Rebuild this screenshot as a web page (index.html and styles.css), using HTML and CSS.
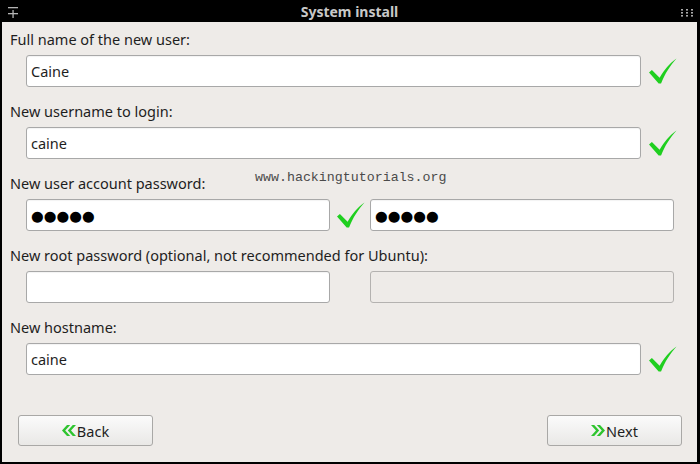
FILE: index.html
```html
<!DOCTYPE html>
<html lang="en">
<head>
    <meta charset="UTF-8">
    <title>System install</title>
    <link rel="stylesheet" href="styles.css">
</head>
<body>
    <div class="window">
        <header class="titlebar">
            <svg class="pin" width="10" height="12" viewBox="0 0 10 12">
                <g fill="#b4b4b4">
                    <rect x="0" y="0" width="10" height="1.3"/>
                    <rect x="0" y="6" width="10" height="1.3"/>
                    <rect x="4.4" y="3" width="1.3" height="8"/>
                </g>
            </svg>
            <span class="title">System install</span>
            <svg class="grip" width="12" height="8" viewBox="0 0 12 8">
                <g fill="#a8a8a8">
                    <rect x="0" y="0" width="2" height="1.6"/><rect x="5" y="0" width="2" height="1.6"/><rect x="10" y="0" width="2" height="1.6"/>
                    <rect x="0" y="3" width="2" height="1.6"/><rect x="5" y="3" width="2" height="1.6"/><rect x="10" y="3" width="2" height="1.6"/>
                    <rect x="0" y="6" width="2" height="1.6"/><rect x="5" y="6" width="2" height="1.6"/><rect x="10" y="6" width="2" height="1.6"/>
                </g>
            </svg>
        </header>

        <main class="content">
            <div class="field">
                <div class="label">Full name of the new user:</div>
                <div class="entry-row single">
                    <div class="entry">Caine</div>
                    <svg class="check" viewBox="0 0 30 28"><path d="M1 15 L4 12.5 L12 20.5 C17 12 22 6 29.5 0.5 C23 8 17.5 16 13.5 26.5 L11 26.5 Z"/></svg>
                </div>
            </div>

            <div class="field">
                <div class="label">New username to login:</div>
                <div class="entry-row single">
                    <div class="entry">caine</div>
                    <svg class="check" viewBox="0 0 30 28"><path d="M1 15 L4 12.5 L12 20.5 C17 12 22 6 29.5 0.5 C23 8 17.5 16 13.5 26.5 L11 26.5 Z"/></svg>
                </div>
            </div>

            <div class="field">
                <div class="label">New user account password:</div>
                <div class="entry-row pair">
                    <div class="entry secret">●●●●●</div>
                    <svg class="check" viewBox="0 0 30 28"><path d="M1 15 L4 12.5 L12 20.5 C17 12 22 6 29.5 0.5 C23 8 17.5 16 13.5 26.5 L11 26.5 Z"/></svg>
                    <div class="entry secret">●●●●●</div>
                </div>
            </div>

            <div class="field">
                <div class="label">New root password (optional, not recommended for Ubuntu):</div>
                <div class="entry-row pair">
                    <div class="entry"></div>
                    <span></span>
                    <div class="entry disabled"></div>
                </div>
            </div>

            <div class="field">
                <div class="label">New hostname:</div>
                <div class="entry-row single">
                    <div class="entry">caine</div>
                    <svg class="check" viewBox="0 0 30 28"><path d="M1 15 L4 12.5 L12 20.5 C17 12 22 6 29.5 0.5 C23 8 17.5 16 13.5 26.5 L11 26.5 Z"/></svg>
                </div>
            </div>

            <div class="watermark">www.hackingtutorials.org</div>

            <footer class="buttons">
                <button class="btn">
                    <svg class="arrows" width="14" height="11" viewBox="0 0 14 11">
                        <path d="M5 0 H8.2 L3.2 5.5 L8.2 11 H5 L0 5.5 Z M10.8 0 H14 L9 5.5 L14 11 H10.8 L5.8 5.5 Z"/>
                    </svg>Back
                </button>
                <button class="btn">
                    <svg class="arrows" width="14" height="11" viewBox="0 0 14 11">
                        <path d="M0 0 H3.2 L8.2 5.5 L3.2 11 H0 L5 5.5 Z M5.8 0 H9 L14 5.5 L9 11 H5.8 L10.8 5.5 Z"/>
                    </svg>Next
                </button>
            </footer>
        </main>
    </div>
</body>
</html>
```

FILE: styles.css
```css
body {
    margin: 0;
    background-color: #000;
    font-family: "Noto Sans", sans-serif;
}
.window {
    width: 700px;
    height: 464px;
    display: flex;
    flex-direction: column;
}
.titlebar {
    height: 22px;
    display: flex;
    align-items: center;
    justify-content: space-between;
    padding: 0 7px 0 8px;
    color: #c8c8c8;
}
.pin {
    margin-top: 3px;
}
.grip {
    margin-top: 3px;
}
.title {
    font-weight: bold;
    font-size: 14px;
}
.content {
    flex: 1;
    position: relative;
    display: flex;
    flex-direction: column;
    margin: 0 3px 2px 2px;
    padding: 7px 0 0 8px;
    background-color: #eeebe8;
    color: #1e1e1e;
    font-size: 14.5px;
}
.field + .field {
    margin-top: 14px;
}
.label {
    line-height: 20px;
    margin-bottom: 6px;
}
.entry-row {
    display: grid;
    align-items: center;
    margin-left: 16px;
}
.entry-row.single {
    grid-template-columns: 615px 29px;
    column-gap: 7px;
}
.entry-row.pair {
    grid-template-columns: 304px 40px 304px;
}
.entry {
    box-sizing: border-box;
    height: 32px;
    padding: 0 4px;
    display: flex;
    align-items: center;
    background-color: #fff;
    border: 1px solid #a8a8a8;
    border-radius: 3px;
    box-shadow: inset 0 1px 1px rgba(0, 0, 0, 0.05);
}
.entry.disabled {
    background-color: #eeebe8;
    border-color: #b4b2b0;
    box-shadow: none;
}
.entry.secret {
    font-family: "DejaVu Sans", sans-serif;
    font-size: 14.6px;
    color: #000;
}
.check {
    width: 29px;
    height: 27px;
    justify-self: center;
    fill: #1fcf1f;
}
.watermark {
    position: absolute;
    left: 253px;
    top: 148px;
    font-family: "Liberation Mono", monospace;
    font-size: 13.3px;
    line-height: 16px;
    color: #4a4a4a;
}
.buttons {
    margin-top: auto;
    display: flex;
    justify-content: space-between;
    padding: 0 15px 16px 8px;
}
.btn {
    width: 135px;
    height: 31px;
    display: flex;
    align-items: center;
    justify-content: center;
    font-family: "Noto Sans", sans-serif;
    font-size: 14.5px;
    color: #1e1e1e;
    background: linear-gradient(#fbfbfb, #e9e8e6);
    border: 1px solid #a9a8a6;
    border-radius: 3px;
    padding: 0;
}
.arrows {
    fill: #2ec42e;
    margin-right: 1px;
}
```
